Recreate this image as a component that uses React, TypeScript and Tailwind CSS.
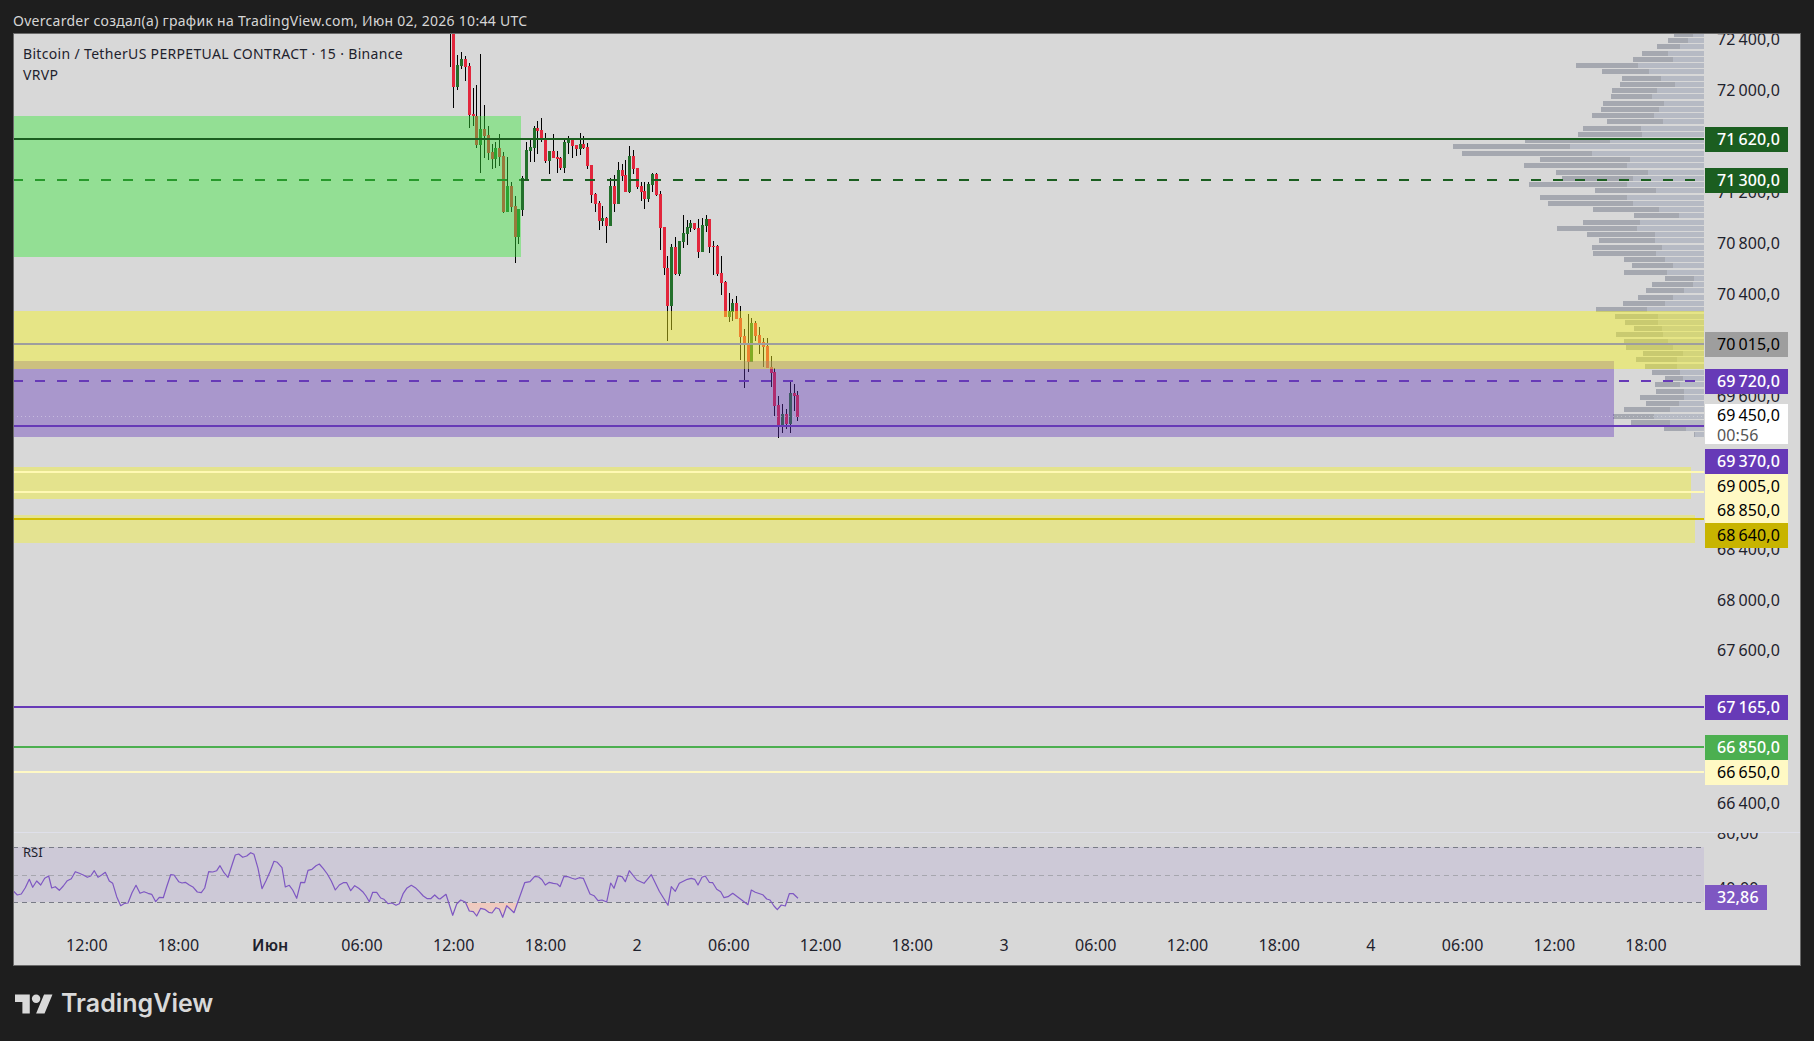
// BTC chart snapshot: chart geometry is in page pixels, read off the screenshot
type Candle = [number, number, number, number, number, "r" | "g"];

// x, wick top, wick bottom, body top, body bottom (3x crop coordinates)
const candlesA: Candle[] = [
  [61, 42, 140, 42, 42, "g"], [70, 30, 263, 30, 200, "r"], [82, 105, 210, 135, 200, "g"], [94, 97, 146, 118, 137, "g"],
  [106, 108, 182, 118, 140, "r"], [118, 130, 325, 138, 285, "r"], [130, 205, 318, 283, 287, "r"], [139, 195, 385, 287, 375, "r"],
  [151, 102, 460, 327, 375, "g"], [163, 255, 413, 327, 347, "r"], [175, 318, 420, 346, 398, "r"], [187, 373, 447, 397, 416, "r"],
  [196, 365, 445, 385, 416, "g"], [208, 342, 438, 385, 411, "r"], [220, 397, 578, 408, 575, "r"], [232, 411, 575, 498, 575, "g"],
  [244, 486, 575, 498, 560, "r"], [256, 528, 728, 558, 650, "r"], [265, 568, 672, 568, 650, "g"], [277, 468, 588, 475, 570, "g"],
  [289, 366, 478, 390, 478, "g"], [301, 360, 426, 381, 392, "g"], [313, 318, 426, 325, 383, "g"], [322, 303, 402, 324, 332, "r"],
  [334, 294, 365, 330, 355, "r"], [346, 339, 429, 358, 423, "r"], [358, 393, 462, 393, 422, "g"], [370, 342, 415, 393, 413, "r"],
  [382, 393, 459, 411, 416, "r"], [391, 411, 450, 414, 444, "r"], [403, 360, 459, 366, 444, "g"], [415, 348, 402, 358, 368, "g"],
  [427, 354, 414, 360, 378, "r"], [439, 375, 408, 375, 387, "r"], [451, 339, 405, 372, 386, "g"], [460, 348, 387, 372, 384, "r"],
  [472, 369, 447, 381, 438, "r"], [484, 435, 549, 435, 525, "r"], [496, 519, 576, 522, 552, "r"], [508, 543, 630, 549, 603, "r"],
  [517, 558, 618, 594, 603, "g"], [529, 591, 669, 594, 618, "r"], [541, 474, 618, 498, 618, "g"], [553, 465, 576, 498, 552, "r"],
  [565, 426, 552, 450, 552, "g"], [577, 432, 483, 450, 468, "r"], [586, 420, 516, 465, 516, "r"], [598, 378, 519, 408, 516, "g"],
  [610, 390, 462, 408, 447, "r"], [622, 444, 507, 444, 501, "r"], [634, 486, 543, 498, 516, "r"], [643, 486, 567, 513, 537, "r"],
  [655, 486, 546, 492, 537, "g"], [667, 459, 516, 462, 495, "g"], [679, 459, 528, 462, 525, "r"], [691, 513, 690, 522, 624, "r"],
];
const candlesB: Candle[] = [
  [73, 81, 225, 81, 204, "r"], [82, 168, 423, 204, 318, "r"], [94, 132, 390, 141, 318, "g"], [106, 111, 225, 141, 222, "r"],
  [118, 123, 228, 123, 222, "g"], [130, 45, 144, 99, 126, "g"], [142, 60, 135, 81, 102, "g"], [151, 60, 96, 69, 84, "g"],
  [163, 69, 90, 69, 87, "r"], [175, 57, 174, 84, 156, "r"], [187, 54, 156, 75, 156, "g"], [199, 45, 96, 57, 78, "g"],
  [208, 57, 159, 57, 141, "r"], [220, 123, 225, 138, 141, "r"], [232, 135, 228, 138, 222, "r"], [244, 168, 285, 219, 249, "r"],
  [256, 243, 351, 246, 351, "r"], [268, 279, 366, 333, 351, "g"], [277, 297, 363, 309, 336, "g"], [289, 288, 357, 309, 357, "r"],
  [301, 318, 480, 354, 411, "r"], [313, 387, 564, 408, 432, "r"], [325, 342, 516, 432, 486, "r"], [334, 354, 486, 369, 486, "g"],
  [346, 363, 423, 369, 408, "r"], [358, 381, 462, 405, 432, "r"], [370, 414, 501, 426, 441, "r"], [382, 414, 504, 438, 504, "r"],
  [394, 468, 561, 501, 519, "r"], [403, 504, 648, 516, 618, "r"], [415, 588, 714, 615, 678, "r"], [427, 612, 699, 642, 678, "g"],
  [439, 627, 687, 642, 672, "r"], [451, 546, 699, 579, 672, "g"], [463, 552, 633, 579, 588, "r"], [472, 573, 663, 585, 651, "r"],
];

const candles = [
  ...candlesA.map(([x, a, b, c, d, k]) => ({ x: 430 + Math.floor(x / 3), wt: 20 + a / 3, wb: 20 + b / 3, bt: 20 + c / 3, bb: 20 + d / 3, k })),
  ...candlesB.map(([x, a, b, c, d, k]) => ({ x: 640 + Math.floor(x / 3), wt: 200 + a / 3, wb: 200 + b / 3, bt: 200 + c / 3, bb: 200 + d / 3, k })),
];

// left edge and colour split of each volume row, in 3x crop coordinates from x=1420
const vrvp: [number, number][] = [
  [762, 820], [744, 804], [711, 780], [666, 744], [639, 759], [468, 654], [546, 687], [606, 723], [600, 765], [576, 711],
  [573, 696], [549, 732], [543, 717], [516, 702], [561, 729], [489, 663], [474, 666], [315, 570], [99, 450], [126, 516],
  [360, 630], [312, 621], [408, 684], [426, 639], [327, 621], [525, 708], [360, 621], [384, 639], [519, 717], [642, 777],
  [489, 660], [411, 651], [501, 705], [537, 705], [516, 726], [519, 708], [612, 735], [636, 759], [612, 741], [735, 822],
  [696, 819], [678, 792], [654, 759], [609, 735], [528, 681], [585, 714], [615, 714], [642, 726], [588, 729], [612, 744],
  [618, 759], [669, 789], [648, 771], [675, 771], [696, 780], [735, 789], [705, 780], [708, 792], [660, 792], [678, 777],
  [612, 750], [579, 702], [633, 750], [732, 798], [822, 825],
];

const rsiA = [
  40, 213, 52, 225, 64, 222, 76, 203, 88, 178, 98, 202, 110, 183, 122, 195, 134, 175, 146, 168, 155, 204, 166, 200, 178, 211, 190, 198, 202, 182, 214, 176,
  226, 155, 238, 160, 250, 165, 262, 172, 272, 168, 283, 152, 294, 172, 306, 164, 316, 157, 328, 183, 338, 190, 350, 230, 362, 257, 374, 250, 384, 249,
  396, 218, 408, 196, 420, 220, 432, 215, 444, 220, 455, 223, 467, 245, 478, 232, 490, 233, 500, 200, 512, 164, 522, 165, 536, 185, 546, 189, 556, 187,
  568, 195, 580, 202, 592, 216, 604, 218, 614, 204, 626, 155, 638, 156, 650, 152, 660, 137, 672, 158, 684, 172, 696, 135, 706, 105, 716, 102, 728, 112,
  740, 108, 752, 98, 762, 103, 774, 145, 786, 206, 798, 182, 810, 155, 822, 124, 832, 127, 846, 143, 856, 201, 868, 196, 878, 210, 890, 235, 902, 187,
  914, 188, 924, 151, 936, 148, 948, 137, 958, 132, 970, 146, 982, 162, 994, 183, 1006, 210, 1018, 195, 1030, 188, 1040, 188, 1052, 212, 1064, 197,
  1076, 205, 1088, 215, 1098, 228, 1108, 245, 1118, 217, 1130, 217, 1142, 234, 1152, 238, 1164, 251, 1176, 249, 1188, 256, 1198, 251, 1210, 220,
  1220, 205, 1234, 196, 1246, 203, 1258, 215, 1270, 228, 1282, 236, 1292, 236, 1304, 225, 1316, 236,
];
const rsiB = [
  0, 207, 18, 193, 38, 256, 50, 222, 62, 210, 76, 216, 88, 243, 100, 245, 110, 258, 122, 235, 134, 238, 146, 247, 156, 249, 168, 233, 178, 237, 188, 262,
  200, 227, 222, 248, 254, 158, 270, 155, 284, 139, 296, 141, 306, 149, 316, 165, 328, 157, 340, 160, 352, 162, 360, 170, 372, 139, 384, 140, 396, 145,
  406, 148, 418, 143, 430, 145, 450, 192, 462, 197, 474, 212, 486, 210, 500, 216, 512, 159, 522, 175, 534, 138, 546, 140, 556, 155, 568, 122, 590, 150,
  612, 160, 634, 134, 658, 184, 684, 226, 694, 170, 706, 184, 718, 160, 730, 154, 742, 148, 754, 145, 764, 148, 774, 165, 786, 142, 796, 138, 808, 157,
  818, 158, 830, 178, 842, 185, 852, 203, 864, 200, 878, 190, 902, 208, 924, 224, 934, 180, 946, 187, 968, 194, 980, 207, 990, 210, 1002, 228, 1012, 239,
  1024, 225, 1036, 228, 1048, 191, 1060, 191, 1074, 205,
];

const rsiPoints: [number, number][] = [];
for (let i = 0; i < rsiA.length; i += 2) rsiPoints.push([rsiA[i] / 3, 820 + rsiA[i + 1] / 3]);
for (let i = 0; i < rsiB.length; i += 2) rsiPoints.push([440 + rsiB[i] / 3, 830 + rsiB[i + 1] / 3]);
const rsiLine = rsiPoints.map(([x, y]) => `${x.toFixed(1)},${y.toFixed(1)}`).join(" ");

const ticks: [string, number][] = [
  ["72\u2009400,0", 39], ["72\u2009000,0", 90], ["71\u2009200,0", 192], ["70\u2009800,0", 243], ["70\u2009400,0", 294],
  ["69\u2009600,0", 396], ["68\u2009400,0", 549], ["68\u2009000,0", 600], ["67\u2009600,0", 650], ["67\u2009200,0", 701], ["66\u2009400,0", 803],
];

const priceLabels: { text: string; top: number; cls: string }[] = [
  { text: "71\u2009620,0", top: 127, cls: "bg-[#1b5e20] text-white font-medium" },
  { text: "71\u2009300,0", top: 168, cls: "bg-[#1b5e20] text-white font-medium" },
  { text: "70\u2009015,0", top: 332, cls: "bg-[#9e9e9e] text-black" },
  { text: "69\u2009720,0", top: 369, cls: "bg-[#673ab7] text-white font-medium" },
  { text: "69\u2009370,0", top: 449, cls: "bg-[#673ab7] text-white font-medium" },
  { text: "69\u2009005,0", top: 474, cls: "bg-[#fff9c4] text-black" },
  { text: "68\u2009850,0", top: 498, cls: "bg-[#fff9c4] text-black" },
  { text: "68\u2009640,0", top: 523, cls: "bg-[#c8b400] text-black" },
  { text: "67\u2009165,0", top: 695, cls: "bg-[#673ab7] text-white font-medium" },
  { text: "66\u2009850,0", top: 735, cls: "bg-[#4caf50] text-white font-medium" },
  { text: "66\u2009650,0", top: 760, cls: "bg-[#fff9c4] text-black" },
];

const timeLabels = ["12:00", "18:00", "Июн", "06:00", "12:00", "18:00", "2", "06:00", "12:00", "18:00", "3", "06:00", "12:00", "18:00", "4", "06:00", "12:00", "18:00"];

const PriceChart = () => (
  <svg width={1690} height={798} viewBox="14 34 1690 798" className="block shrink-0">
    {vrvp.map(([left, split], i) => {
      const y = Math.round(34.3 + i * 6.26 - 2.5);
      const l = 1420 + left / 3;
      const s = 1420 + split / 3;
      return (
        <g key={i} shapeRendering="crispEdges">
          <rect x={l} y={y} width={s - l} height={5} fill="#a5a8b0" />
          <rect x={s} y={y} width={1704 - s} height={5} fill="#b6bac4" />
        </g>
      );
    })}
    <g shapeRendering="crispEdges">
      {candles.map((c, i) => (
        <g key={i}>
          <rect x={c.x} y={c.wt} width={1} height={c.wb - c.wt} fill="#000000" />
          {c.bb > c.bt && (
            <rect x={c.x - 1} y={c.bt} width={3} height={c.bb - c.bt} fill={c.k === "r" ? "#e2263c" : "#23702b"} />
          )}
        </g>
      ))}
      <line x1={13} x2={1704} y1={180} y2={180} stroke="#1b5e20" strokeWidth={2} strokeDasharray="10 12" />
      <rect x={13} y={116} width={508} height={141} fill="rgb(56 232 58 / 0.43)" />
      <rect x={13} y={361} width={1601} height={76} fill="rgb(100 55 187 / 0.4)" />
      <rect x={13} y={311} width={1691} height={58} fill="rgb(248 245 30 / 0.44)" />
      <rect x={13} y={467} width={1678} height={32} fill="rgb(248 245 30 / 0.4)" />
      <rect x={13} y={515} width={1682} height={28} fill="rgb(248 245 30 / 0.38)" />
      <rect x={13} y={138} width={1691} height={2} fill="#1b5e20" />
      <rect x={13} y={343} width={1691} height={2} fill="#9e9e9e" />
      <line x1={13} x2={1704} y1={381} y2={381} stroke="#673ab7" strokeWidth={2} strokeDasharray="10 12" />
      <line x1={13} x2={1704} y1={416.5} y2={416.5} stroke="#ffffff" strokeOpacity={0.35} strokeWidth={1} strokeDasharray="1 3" />
      <rect x={13} y={425} width={1691} height={2} fill="#673ab7" />
      <rect x={13} y={471} width={1691} height={2} fill="#fff9b4" />
      <rect x={13} y={491} width={1691} height={2} fill="#fff9b4" />
      <rect x={13} y={518} width={1691} height={2} fill="#d2be00" />
      <rect x={13} y={706} width={1691} height={2} fill="#673ab7" />
      <rect x={13} y={746} width={1691} height={2} fill="#4caf50" />
      <rect x={13} y={771} width={1691} height={2} fill="#fff9c4" />
    </g>
  </svg>
);

const RsiChart = () => (
  <svg width={1690} height={92} viewBox="14 833 1690 92" className="block shrink-0">
    <defs>
      <clipPath id="oversold">
        <rect x={466} y={903} width={50} height={22} />
      </clipPath>
      <linearGradient id="oversoldFill" gradientUnits="userSpaceOnUse" x1={0} x2={0} y1={903} y2={918}>
        <stop offset="0" stopColor="#f2c8bc" />
        <stop offset="1" stopColor="#f2c8bc" stopOpacity={0.35} />
      </linearGradient>
    </defs>
    <rect x={13} y={847} width={1691} height={55} fill="#cdc9d7" />
    <line x1={13} x2={1704} y1={847.5} y2={847.5} stroke="#787b86" strokeDasharray="5 4" />
    <line x1={13} x2={1704} y1={875.5} y2={875.5} stroke="#a6a6ae" strokeDasharray="5 4" />
    <line x1={13} x2={1704} y1={902.5} y2={902.5} stroke="#787b86" strokeDasharray="5 4" />
    <polygon points={`${rsiLine} 800,902 13,902`} fill="url(#oversoldFill)" clipPath="url(#oversold)" />
    <polyline points={rsiLine} fill="none" stroke="#7e57c2" strokeWidth={1.2} strokeLinejoin="round" />
  </svg>
);

const App = () => {
  return (
    <div className="h-[1041px] w-[1814px] overflow-hidden bg-[#1e1e1e] flex flex-col font-['Noto_Sans',sans-serif]">
      <header className="h-[33px] pl-[13px] pt-[7px] flex items-center text-[14px] tracking-[0.28px] text-[#d6d6d6]">
        Overcarder создал(а) график на TradingView.com, Июн 02, 2026 10:44 UTC
      </header>

      {/* Рамка графика */}
      <div className="ml-[13px] w-[1788px] h-[933px] border border-[#6a6a6a] bg-[#d8d8d8] flex flex-col text-[#1e222d]">
        <div className="relative h-[798px] flex overflow-hidden">
          <PriceChart />
          <div className="absolute left-[9px] top-[9px] text-[14px] tracking-[0.33px] leading-[21px] text-[#1e222d]">
            <div>Bitcoin / TetherUS PERPETUAL CONTRACT · 15 · Binance</div>
            <div>VRVP</div>
          </div>

          {/* Шкала цены */}
          <div className="relative flex-1 text-[16px] tracking-[0.15px]">
            {ticks.map(([text, y]) => (
              <div key={text} className="absolute left-[13px] h-[24px] leading-[24px]" style={{ top: y - 46 }}>
                {text}
              </div>
            ))}
            {priceLabels.map((l) => (
              <div key={l.text} className={`absolute left-[1px] w-[83px] h-[25px] leading-[25px] pl-[12px] ${l.cls}`} style={{ top: l.top - 34 }}>
                {l.text}
              </div>
            ))}
            <div className="absolute left-[1px] top-[370px] w-[83px] h-[40px] bg-white pl-[12px] pt-[1px] leading-[20px] text-black">
              <div>69{"\u2009"}450,0</div>
              <div className="text-[#555555]">00:56</div>
            </div>
          </div>
        </div>

        <div className="relative h-[92px] flex overflow-hidden border-t border-[#dfe0ea]">
          <RsiChart />
          <div className="absolute left-[9px] top-[10px] text-[13px] text-[#1e222d]">RSI</div>
          <div className="relative flex-1 text-[16px] tracking-[0.15px]">
            <div className="absolute left-[13px] top-[-12px] h-[24px] leading-[24px]">80,00</div>
            <div className="absolute left-[13px] top-[43px] h-[24px] leading-[24px]">40,00</div>
            <div className="absolute left-[1px] top-[52px] w-[62px] h-[25px] leading-[25px] pl-[12px] bg-[#7e57c2] text-white font-medium">
              32,86
            </div>
          </div>
        </div>

        {/* Шкала времени */}
        <div className="flex-1 flex items-center pl-[27px] text-[16px] tracking-[0.15px]">
          {timeLabels.map((t, i) => (
            <div key={i} className={`w-[91.72px] shrink-0 text-center ${t === "Июн" ? "font-semibold" : ""}`}>
              {t}
            </div>
          ))}
        </div>
      </div>

      <footer className="flex-1 flex items-center pl-[15px] gap-[8px] text-[#d9d9d9]">
        <svg width={38} height={20} viewBox="0 4 36 18" fill="currentColor" className="shrink-0">
          <path d="M14 22H7V11H0V4h14v18zM28 22h-8l7.5-18h8L28 22z" />
          <circle cx={20} cy={8} r={4} />
        </svg>
        <span className="font-['Inter',sans-serif] font-semibold text-[25px]">TradingView</span>
      </footer>
    </div>
  );
};

export default App;
